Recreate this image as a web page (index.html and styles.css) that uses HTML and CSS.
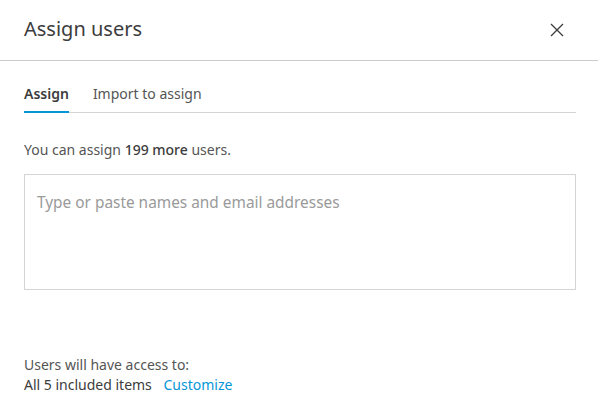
FILE: index.html
```html
<!DOCTYPE html>
<html lang="en">
<head>
  <meta charset="UTF-8">
  <title>Assign users</title>
  <link rel="stylesheet" href="styles.css">
</head>
<body>
  <div class="dialog">
    <div class="header">
      <h1>Assign users</h1>
      <button class="close" aria-label="Close">
        <svg width="14" height="14" viewBox="0 0 14 14"><path d="M1 1 L13 13 M13 1 L1 13" stroke="#3c3c3c" stroke-width="1.3" fill="none"/></svg>
      </button>
    </div>

    <div class="body">
      <div class="tabs">
        <span class="tab active">Assign</span>
        <span class="tab">Import to assign</span>
      </div>

      <p class="quota">You can assign <strong>199 more</strong> users.</p>

      <div class="input">Type or paste names and email addresses</div>

      <div class="access">
        <p>Users will have access to:</p>
        <p class="items"><span>All 5 included items</span> <a href="#">Customize</a></p>
      </div>
    </div>
  </div>
</body>
</html>
```

FILE: styles.css
```css
body {
  margin: 0;
  font-family: "Noto Sans", Arial, sans-serif;
  color: #3c3c3c;
  background: #fff;
}
.dialog {
  width: 598px;
  height: 396px;
  display: flex;
  flex-direction: column;
}
.header {
  height: 60px;
  border-bottom: 1px solid #cccccc;
  display: flex;
  align-items: center;
  justify-content: space-between;
  padding: 0 34px 0 24px;
}
.header h1 {
  margin: 0 0 4px 0;
  font-size: 20px;
  font-weight: 400;
  color: #3c3c3c;
}
.close {
  border: 0;
  background: none;
  padding: 0;
  width: 14px;
  height: 14px;
  margin-top: 0;
}
.body {
  padding: 0 22px 0 24px;
  flex: 1;
  display: flex;
  flex-direction: column;
}
.tabs {
  display: flex;
  gap: 24px;
  margin-top: 23px;
  border-bottom: 1px solid #d4d4d4;
  height: 28px;
}
.tab {
  font-size: 14px;
  color: #555;
  line-height: 20px;
}
.tab.active {
  font-weight: 600;
  color: #3c3c3c;
  border-bottom: 2px solid #0696d7;
  height: 27px;
  margin-bottom: -1px;
}
.quota {
  margin: 27px 0 0 0;
  font-size: 14px;
  line-height: 20px;
  color: #555;
}
.quota strong {
  font-weight: 500;
  color: #3c3c3c;
}
.input {
  margin-top: 14px;
  height: 96px;
  border: 1px solid #d4d4d4;
  padding: 18px 12px 0 12px;
  font-size: 15.4px;
  line-height: 20px;
  color: #9a9a9a;
}
.access {
  margin-top: 65px;
  font-size: 14px;
  line-height: 20px;
}
.access p {
  margin: 0;
  color: #555;
}
.access .items span {
  color: #3c3c3c;
}
.access a {
  color: #0696d7;
  text-decoration: none;
  margin-left: 8px;
}
```
